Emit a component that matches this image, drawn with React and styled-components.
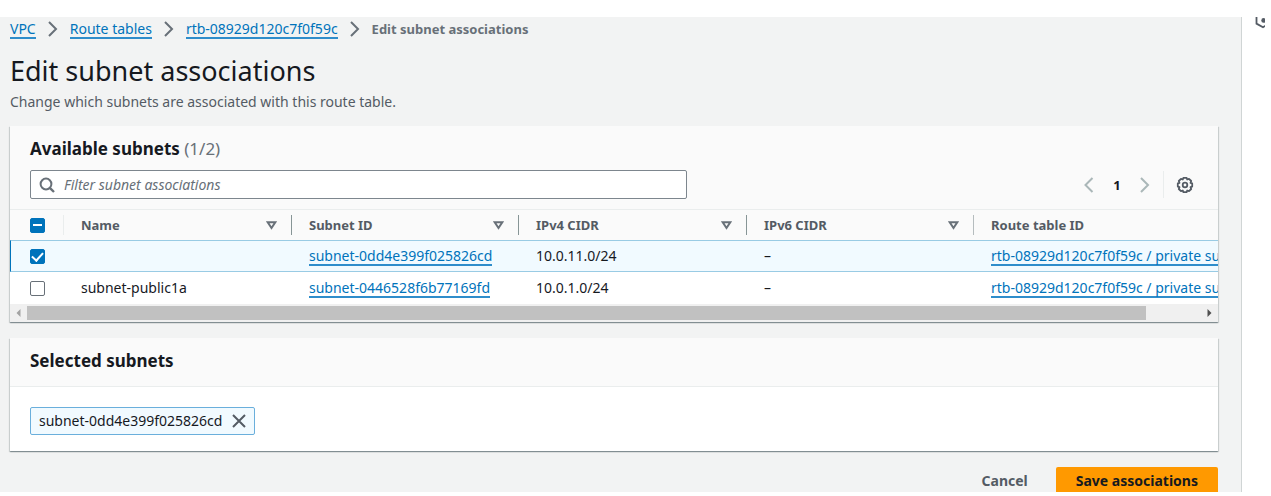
import React, { useEffect, useRef } from "react";
import styled, { createGlobalStyle, css } from "styled-components";

const color = {
  page: "#f2f3f3",
  header: "#fafafa",
  line: "#eaeded",
  link: "#0073bb",
  text: "#16191f",
  muted: "#687078",
  strong: "#545b64",
  selected: "#f1faff",
  selectedLine: "#99cbe4",
};

const GlobalStyle = createGlobalStyle`
  * { box-sizing: border-box; }
  body {
    margin: 0;
    background: #fff;
    color: ${color.text};
    font-family: "Noto Sans", "Open Sans", sans-serif;
    font-size: 14px;
    line-height: 20px;
  }
  button, input { font: inherit; color: inherit; margin: 0; }
`;

const Shell = styled.div`
  display: flex;
  height: 100vh;
  padding: 17px 6px 4px 0;
`;

const Main = styled.main`
  flex: 1;
  min-width: 0;
  overflow: hidden;
  padding: 2px 23px 0 10px;
  background: ${color.page};
  border-right: 1px solid #d0d5d5;
`;

const SidePanel = styled.aside`
  width: 23px;
  padding-left: 13px;
  overflow: hidden;
  svg { display: block; }
`;

const Breadcrumbs = styled.ol`
  display: flex;
  align-items: center;
  gap: 12px;
  height: 20px;
  margin: 0;
  padding: 0;
  list-style: none;
  li {
    display: flex;
    align-items: center;
    gap: 12px;
  }
  li:last-child { color: ${color.muted}; font-size: 13px; font-weight: 700; }
`;

const Link = styled.a`
  display: inline-block;
  line-height: 17px;
  color: ${color.link};
  text-decoration: none;
  border-bottom: 2px solid #2f8dcb;
`;

const Title = styled.h1`
  margin: 14px 0 0;
  font-size: 27px;
  line-height: 36px;
  font-weight: 400;
`;

const Description = styled.p`
  margin: 3px 0 14px;
  color: ${color.strong};
`;

const Card = styled.section`
  margin-bottom: 16px;
  background: #fff;
  box-shadow: 0 1px 1px 0 rgba(0, 28, 36, 0.3), 1px 1px 1px 0 rgba(0, 28, 36, 0.12),
    -1px 1px 1px 0 rgba(0, 28, 36, 0.12);
`;

const CardHeader = styled.header`
  padding: 11px 20px ${(p) => (p.$toolbar ? 10 : 13)}px;
  background: ${color.header};
  border-bottom: 1px solid ${color.line};
`;

const CardBody = styled.div`
  padding: 20px 20px 16px;
`;

const CardTitle = styled.h2`
  margin: 0;
  font-size: 17px;
  line-height: 24px;
  font-weight: 700;
  span { color: ${color.muted}; font-weight: 400; }
`;

const Toolbar = styled.div`
  display: flex;
  align-items: center;
  justify-content: space-between;
  margin-top: 9px;
`;

const SearchBox = styled.label`
  display: flex;
  align-items: center;
  gap: 9px;
  width: 57%;
  max-width: 657px;
  height: 29px;
  padding: 0 8px;
  background: #fff;
  border: 1px solid #7d868e;
  border-radius: 2px;
  input {
    flex: 1;
    min-width: 0;
    height: 24px;
    padding: 0;
    border: 0;
    outline: 0;
    background: transparent;
  }
  input::placeholder { color: ${color.muted}; font-style: italic; opacity: 1; }
`;

const Pager = styled.div`
  display: flex;
  align-items: center;
  padding-right: 4px;
`;

const IconButton = styled.button`
  display: flex;
  align-items: center;
  justify-content: center;
  width: ${(p) => p.$width || 18}px;
  height: 24px;
  padding: 0;
  border: 0;
  background: transparent;
`;

const PageNumber = styled.button`
  width: 38px;
  padding: 0;
  border: 0;
  background: transparent;
  font-size: 13px;
  font-weight: 700;
`;

const PagerDivider = styled.span`
  width: 1px;
  height: 27px;
  margin: 0 12px 0 9px;
  background: ${color.line};
`;

const TableClip = styled.div`
  overflow: hidden;
`;

const Table = styled.table`
  width: 1268px;
  table-layout: fixed;
  border-collapse: separate;
  border-spacing: 0;
  text-align: left;
`;

const HeadCell = styled.th`
  height: 30px;
  padding: 0 0 0 17px;
  background: ${color.header};
  color: ${color.strong};
  font-size: 13px;
  font-weight: 700;
`;

const HeadContent = styled.div`
  display: flex;
  align-items: center;
  justify-content: space-between;
  height: 20px;
  padding-right: 14px;
  border-right: ${(p) => (p.$divider ? `1px solid ${p.$divider}` : "0")};
`;

const Cell = styled.td`
  height: 32px;
  padding: 0 0 0 17px;
  white-space: nowrap;
`;

const pickCell = css`
  padding: 0 0 0 20px;
`;

const PickHead = styled(HeadCell)`${pickCell}`;
const PickCell = styled(Cell)`${pickCell}`;

const Row = styled.tr`
  ${(p) =>
    p.$selected &&
    css`
      td {
        background: ${color.selected};
        border-top: 1px solid ${color.selectedLine};
        border-bottom: 1px solid ${color.selectedLine};
      }
      td:first-child { border-left: 1px solid ${color.link}; padding-left: 19px; }
    `}
`;

const Checkbox = styled.input`
  appearance: none;
  display: flex;
  align-items: center;
  justify-content: center;
  width: 15px;
  height: 15px;
  background: #fff;
  border: 1px solid ${color.muted};
  border-radius: 2px;
  &:checked, &:indeterminate { background: ${color.link}; border-color: ${color.link}; }
  &:checked::after {
    content: "";
    width: 5px;
    height: 9px;
    margin-bottom: 2px;
    border: solid #fff;
    border-width: 0 2px 2px 0;
    transform: rotate(42deg);
  }
  &:indeterminate::after {
    content: "";
    width: 9px;
    height: 2px;
    margin: 0;
    border: 0;
    transform: none;
    background: #fff;
  }
`;

const Scrollbar = styled.div`
  display: flex;
  align-items: center;
  height: 18px;
  padding: 2px 0;
  background: #f0f0f0;
  svg { flex: none; }
`;

const ScrollTrack = styled.div`
  flex: 1;
  height: 14px;
`;

const ScrollThumb = styled.div`
  width: 95.3%;
  height: 100%;
  background: #c1c1c1;
`;

const Token = styled.span`
  display: inline-flex;
  align-items: center;
  gap: 10px;
  height: 28px;
  padding: 0 8px;
  background: ${color.selected};
  border: 1px solid #6aafdc;
  border-radius: 2px;
  vertical-align: top;
`;

const Actions = styled.footer`
  display: flex;
  justify-content: flex-end;
  gap: 8px;
`;

const Button = styled.button`
  flex: none;
  height: 28px;
  padding: 0 20px;
  border: 0;
  border-radius: 2px;
  background: ${(p) => (p.$primary ? "#ff9900" : "transparent")};
  color: ${(p) => (p.$primary ? color.text : color.strong)};
  font-weight: 700;
`;

const Chevron = ({ left, stroke = color.muted }) => (
  <svg width="10" height="16" viewBox="0 0 10 16" fill="none" stroke={stroke} strokeWidth="2" aria-hidden="true">
    <path d={left ? "M8.5 1 L1.5 8 L8.5 15" : "M1 1 L8 8 L1 15"} />
  </svg>
);

const SearchIcon = () => (
  <svg width="16" height="16" viewBox="0 0 16 16" fill="none" stroke={color.muted} strokeWidth="2" aria-hidden="true">
    <circle cx="7" cy="7" r="5.4" />
    <path d="M10.8 10.8 L15 15" strokeWidth="2.4" />
  </svg>
);

const GearIcon = () => (
  <svg width="18" height="18" viewBox="0 0 18 18" fill="none" stroke={color.strong} strokeWidth="1.8" strokeLinejoin="round" aria-hidden="true">
    <path d="M7.4 1.8 H10.6 L11.2 3.5 L13 2.8 L15.2 5 L14.5 6.8 L16.2 7.4 V10.6 L14.5 11.2 L15.2 13 L13 15.2 L11.2 14.5 L10.6 16.2 H7.4 L6.8 14.5 L5 15.2 L2.8 13 L3.5 11.2 L1.8 10.6 V7.4 L3.5 6.8 L2.8 5 L5 2.8 L6.8 3.5 Z" />
    <circle cx="9" cy="9" r="2.3" />
  </svg>
);

const FilterIcon = () => (
  <svg width="11" height="9" viewBox="0 0 11 9" fill="none" stroke={color.muted} strokeWidth="2" aria-hidden="true">
    <path d="M1.7 1.2 H9.3 L5.5 7 Z" />
  </svg>
);

const CloseIcon = () => (
  <svg width="14" height="14" viewBox="0 0 14 14" fill="none" stroke={color.strong} strokeWidth="2" aria-hidden="true">
    <path d="M1 1 L13 13 M13 1 L1 13" />
  </svg>
);

const HexIcon = () => (
  <svg width="10" height="12" viewBox="0 0 10 12" fill="none" stroke={color.strong} strokeWidth="1.8" aria-hidden="true">
    <path d="M1.5 -2 V6.6 L8 10.2 L14 6.6" />
    <circle cx="8.6" cy="3.4" r="2.3" fill={color.strong} stroke="none" />
  </svg>
);

const ScrollArrow = ({ left }) => (
  <svg width="17" height="14" viewBox="0 0 17 14" aria-hidden="true">
    <path d={left ? "M10.5 3 V11 L6.5 7 Z" : "M6.5 3 V11 L10.5 7 Z"} fill={left ? "#a3a3a3" : "#505050"} />
  </svg>
);

const columns = [
  { label: "Name", divider: "#879596" },
  { label: "Subnet ID", divider: "#879596" },
  { label: "IPv4 CIDR", divider: "#879596" },
  { label: "IPv6 CIDR", divider: "#b5bcbe" },
  { label: "Route table ID" },
];

const routeTable = "rtb-08929d120c7f0f59c";

const rows = [
  { name: "", id: "subnet-0dd4e399f025826cd", cidr: "10.0.11.0/24", selected: true },
  { name: "subnet-public1a", id: "subnet-0446528f6b77169fd", cidr: "10.0.1.0/24", selected: false },
];

export default function App() {
  const allRef = useRef(null);
  useEffect(() => {
    allRef.current.indeterminate = true;
  }, []);

  return (
    <>
      <GlobalStyle />
      <Shell>
        <Main>
          <nav aria-label="Breadcrumbs">
            <Breadcrumbs>
              {["VPC", "Route tables", routeTable].map((label) => (
                <li key={label}>
                  <Link href="#">{label}</Link>
                  <Chevron />
                </li>
              ))}
              <li aria-current="page">Edit subnet associations</li>
            </Breadcrumbs>
          </nav>
          <Title>Edit subnet associations</Title>
          <Description>Change which subnets are associated with this route table.</Description>

          <Card>
            <CardHeader $toolbar>
              <CardTitle>
                Available subnets <span>(1/2)</span>
              </CardTitle>
              <Toolbar>
                <SearchBox>
                  <SearchIcon />
                  <input type="text" aria-label="Filter subnet associations" placeholder="Filter subnet associations" />
                </SearchBox>
                <Pager>
                  <IconButton aria-label="Previous page"><Chevron left stroke="#aab7b8" /></IconButton>
                  <PageNumber>1</PageNumber>
                  <IconButton aria-label="Next page"><Chevron stroke="#aab7b8" /></IconButton>
                  <PagerDivider />
                  <IconButton aria-label="Preferences"><GearIcon /></IconButton>
                </Pager>
              </Toolbar>
            </CardHeader>
            <TableClip>
              <Table>
                <colgroup>
                  <col style={{ width: 54 }} />
                  <col style={{ width: 228 }} />
                  <col style={{ width: 227 }} />
                  <col style={{ width: 228 }} />
                  <col style={{ width: 227 }} />
                  <col />
                </colgroup>
                <thead>
                  <tr>
                    <PickHead>
                      <HeadContent $divider={color.line}>
                        <Checkbox ref={allRef} type="checkbox" aria-label="Select all subnets" />
                      </HeadContent>
                    </PickHead>
                    {columns.map((c) => (
                      <HeadCell key={c.label} scope="col">
                        <HeadContent $divider={c.divider}>
                          {c.label}
                          {c.divider && <FilterIcon />}
                        </HeadContent>
                      </HeadCell>
                    ))}
                  </tr>
                </thead>
                <tbody>
                  {rows.map((r) => (
                    <Row key={r.id} $selected={r.selected}>
                      <PickCell>
                        <Checkbox type="checkbox" defaultChecked={r.selected} aria-label={`Select ${r.id}`} />
                      </PickCell>
                      <Cell>{r.name}</Cell>
                      <Cell><Link href="#">{r.id}</Link></Cell>
                      <Cell>{r.cidr}</Cell>
                      <Cell>–</Cell>
                      <Cell><Link href="#">{routeTable} / private subnet route</Link></Cell>
                    </Row>
                  ))}
                </tbody>
              </Table>
            </TableClip>
            <Scrollbar>
              <ScrollArrow left />
              <ScrollTrack><ScrollThumb /></ScrollTrack>
              <ScrollArrow />
            </Scrollbar>
          </Card>

          <Card>
            <CardHeader>
              <CardTitle>Selected subnets</CardTitle>
            </CardHeader>
            <CardBody>
              <Token>
                subnet-0dd4e399f025826cd
                <IconButton $width={14} aria-label="Remove subnet-0dd4e399f025826cd"><CloseIcon /></IconButton>
              </Token>
            </CardBody>
          </Card>

          <Actions>
            <Button>Cancel</Button>
            <Button $primary>Save associations</Button>
          </Actions>
        </Main>
        <SidePanel aria-label="Help panel">
          <HexIcon />
        </SidePanel>
      </Shell>
    </>
  );
}
